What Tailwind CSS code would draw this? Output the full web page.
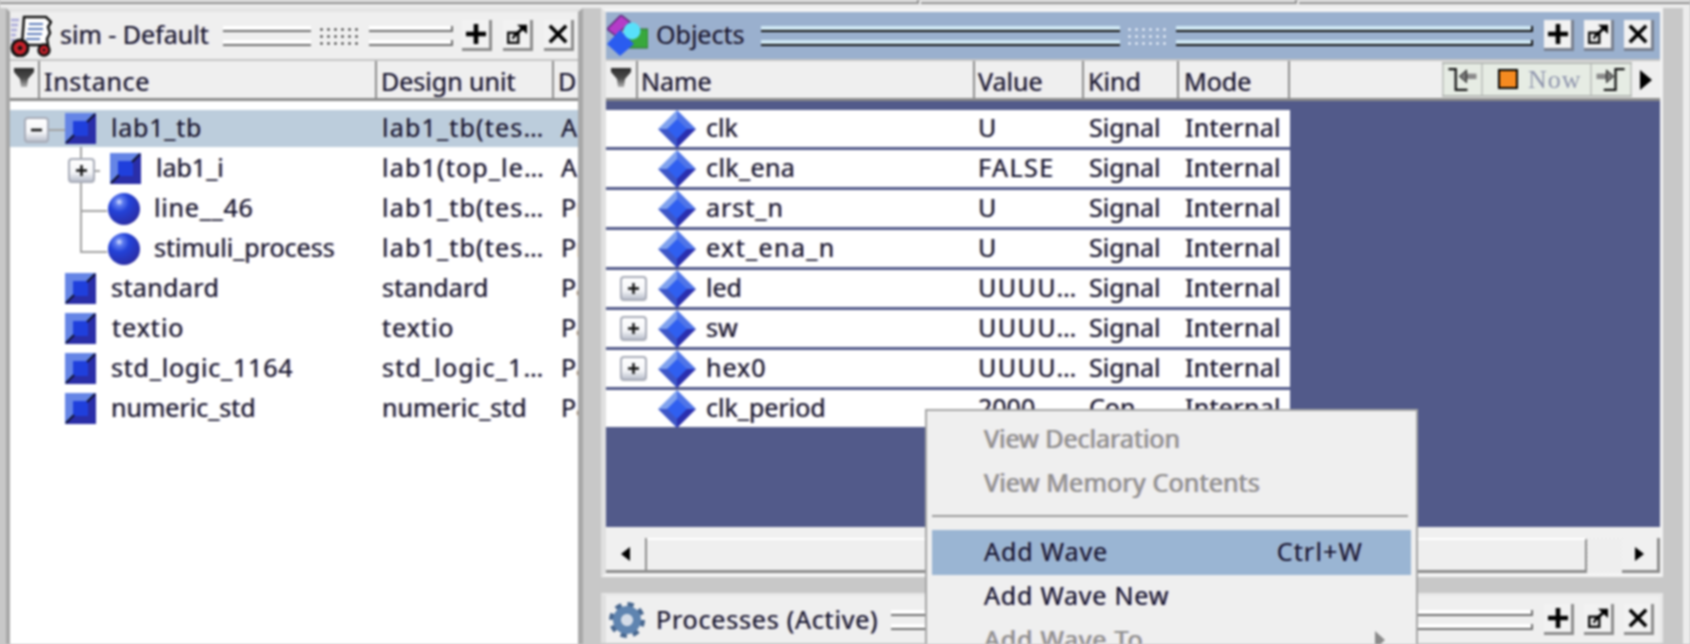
<!DOCTYPE html>
<html lang="en">
<head>
    <meta charset="UTF-8">
    <title>sim - Objects</title>
    <script src="https://cdn.jsdelivr.net/npm/@tailwindcss/browser@4"></script>
</head>
<body class="m-0 bg-[#c8c8c8]">
<svg class="absolute w-0 h-0">
    <defs>
        <radialGradient id="ballFill" cx="35%" cy="28%" r="75%">
            <stop offset="0" stop-color="#dfe6ff"/>
            <stop offset="0.16" stop-color="#5f7df0"/>
            <stop offset="0.42" stop-color="#2342d8"/>
            <stop offset="1" stop-color="#2a2ca4"/>
        </radialGradient>
        <linearGradient id="boxFill" x1="0" y1="0" x2="0" y2="1">
            <stop offset="0" stop-color="#ffffff"/>
            <stop offset="0.6" stop-color="#f4f5f8"/>
            <stop offset="1" stop-color="#b4bac8"/>
        </linearGradient>
        <linearGradient id="funnelFill" x1="0" y1="0" x2="0" y2="1">
            <stop offset="0" stop-color="#2e2e2e"/>
            <stop offset="0.55" stop-color="#4c4c4c"/>
            <stop offset="1" stop-color="#b0b0b0"/>
        </linearGradient>
    </defs>
    <symbol id="sq" viewBox="0 0 31 31">
        <rect width="31" height="31" fill="#2a2ea8"/>
        <polygon points="0,0 31,0 23,8 8,8 8,23 0,31" fill="#6585e6"/>
        <rect x="8" y="8" width="15" height="15" fill="#1f3fdc"/>
        <path d="M22 9 L30 1 M1 30 L9 22" stroke="#10122c" stroke-width="2"/>
    </symbol>
    <symbol id="ball" viewBox="0 0 32 32">
        <circle cx="16" cy="16" r="16" fill="url(#ballFill)"/>
    </symbol>
    <symbol id="dia" viewBox="0 0 38 38">
        <polygon points="19,0 38,19 19,19" fill="#4f75e8"/>
        <polygon points="19,0 0,19 19,19" fill="#80a2ee"/>
        <polygon points="0,19 19,38 19,19" fill="#3d55c8"/>
        <polygon points="38,19 19,38 19,19" fill="#2a2fae"/>
        <polygon points="19,9 29,19 19,29 9,19" fill="#2f5ff0"/>
    </symbol>
    <symbol id="plusbox" viewBox="0 0 27 25">
        <rect x="1" y="1" width="25" height="23" rx="3" fill="url(#boxFill)" stroke="#a8acb8" stroke-width="2"/>
        <path d="M8 12.5 H19 M13.5 7 V18" stroke="#111" stroke-width="2.4"/>
    </symbol>
    <symbol id="addicon" viewBox="0 0 22 22">
        <path d="M11 0 V22 M0 11 H22" stroke="#000" stroke-width="5"/>
    </symbol>
    <symbol id="popicon" viewBox="0 0 24 24">
        <rect x="1.5" y="10.5" width="12" height="12" fill="none" stroke="#111" stroke-width="3"/>
        <rect x="6" y="15" width="3" height="3" fill="#111"/>
        <path d="M8 15 L20 4" stroke="#000" stroke-width="3.5"/>
        <polygon points="12,1 24,1 24,12" fill="#000"/>
    </symbol>
    <symbol id="xicon" viewBox="0 0 22 22">
        <path d="M2 2 L20 20 M20 2 L2 20" stroke="#000" stroke-width="4"/>
    </symbol>
    <symbol id="funnel" viewBox="0 0 20 22">
        <polygon points="0,2 20,2 20,6 14,13 13,21 7,21 6,13 0,6" fill="url(#funnelFill)"/>
    </symbol>
</svg>

<div class="relative w-[1690px] h-[644px] overflow-hidden bg-[#c8c8c8] text-[25px] leading-none text-[#14142e] font-['Noto_Sans','Liberation_Sans',sans-serif] blur-[0.8px] [text-shadow:-1px_0_rgba(225,150,50,.4),1px_0_rgba(50,90,225,.4)]">

    <!-- strip under the main toolbar -->
    <div class="flex h-[8px] bg-[#ececec]">
        <div class="w-[919px] h-[4px] border-b-2 border-r-2 border-[#8e8e8e]"></div>
        <div class="w-[376px] h-[4px] border-b-2 border-r-2 ml-[2px] border-[#8e8e8e]"></div>
        <div class="flex-1 h-[4px] border-b-2 ml-[2px] border-[#8e8e8e]"></div>
    </div>

    <div class="flex h-[636px]">
        <!-- sim panel -->
        <div class="ml-[6px] w-[577px] h-[660px] shrink-0 border-t-[4px] border-l-[4px] border-r-[5px] border-t-[#e4e4e4] border-l-[#a8a8a8] border-r-[#a8a8a8] bg-white">
            <div class="flex items-center h-[47px] bg-[#efefef] pr-[4px]">
                <svg class="w-[42px] h-[42px] shrink-0" viewBox="0 0 42 42">
                    <path d="M1 5 H9 M1 10 H8 M1 15 H7 M1 20 H6 M1 25 H5" stroke="#a8a8d8" stroke-width="2.5"/>
                    <path d="M14 2 H36 L41 7 L38 12 L40 18 L37 24 L38 30 L12 30 Z" fill="#fff" stroke="#111" stroke-width="2.5"/>
                    <path d="M19 9 H33 M18 14 H33 M17 19 H32 M16 24 H30" stroke="#5a7ab8" stroke-width="2.2"/>
                    <circle cx="10" cy="33" r="8" fill="#c8202a" stroke="#111" stroke-width="3"/>
                    <rect x="8" y="31" width="4" height="4" fill="#111" transform="rotate(45 10 33)"/>
                    <circle cx="34" cy="35" r="5.5" fill="#c8202a" stroke="#111" stroke-width="2.5"/>
                    <circle cx="34" cy="35" r="1.5" fill="#111"/>
                </svg>
                <span class="ml-[8px] pb-[3px] w-[163px] shrink-0 whitespace-nowrap">sim - Default</span>
                <div class="flex flex-1 items-center h-[20px] mr-[9px]">
                    <div class="flex flex-col justify-between h-[20px] w-[88px]">
                        <div class="h-[6px] bg-white border-b-2 border-[#6e6e6e]"></div>
                        <div class="h-[6px] bg-white border-b-2 border-[#6e6e6e]"></div>
                    </div>
                    <div class="w-[44px] h-[20px] mx-[7px] bg-[radial-gradient(#333_1px,transparent_1.3px)] bg-[length:7px_7px]"></div>
                    <div class="flex flex-1 flex-col justify-between h-[20px]">
                        <div class="h-[6px] bg-white border-b-2 border-r-2 border-[#6e6e6e]"></div>
                        <div class="h-[6px] bg-white border-b-2 border-r-2 border-[#6e6e6e]"></div>
                    </div>
                </div>
                <div class="flex gap-[11px]">
                    <div class="flex items-center justify-center w-[30px] h-[31px] bg-[#f2f2f2] border-r-[3px] border-b-[3px] border-[#8c8c8c]"><svg class="w-[20px] h-[20px]"><use href="#addicon"/></svg></div>
                    <div class="flex items-center justify-center w-[30px] h-[31px] bg-[#f2f2f2] border-r-[3px] border-b-[3px] border-[#8c8c8c]"><svg class="w-[20px] h-[20px]"><use href="#popicon"/></svg></div>
                    <div class="flex items-center justify-center w-[30px] h-[31px] bg-[#f2f2f2] border-r-[3px] border-b-[3px] border-[#8c8c8c]"><svg class="w-[20px] h-[20px]"><use href="#xicon"/></svg></div>
                </div>
            </div>
            <div class="flex h-[42px] bg-[#efefef] border-t-2 border-b-[3px] border-t-[#c4c4c4] border-b-[#8c8c8c] overflow-hidden">
                <div class="flex items-center justify-center w-[30px] pb-[5px] border-r-2 border-[#8c8c8c]"><svg class="w-[20px] h-[22px]"><use href="#funnel"/></svg></div>
                <div class="flex items-center w-[337px] pl-[4px] pt-[4px] tracking-[0.7px] border-r-2 border-[#8c8c8c]">Instance</div>
                <div class="flex items-center w-[177px] pl-[4px] pt-[4px] border-r-2 border-[#8c8c8c]">Design unit</div>
                <div class="flex items-center flex-1 pl-[4px] pt-[4px] overflow-hidden">D</div>
            </div>
            <div class="relative flex flex-col gap-[3px] pt-[9px] [&_span]:pb-[3px] [&>div>div:not(:first-child)]:pb-[3px]">
                <div class="flex items-center h-[37px] bg-[#bccddc]">
                    <div class="flex items-center w-[367px] pl-[55px] gap-[15px]"><svg class="w-[31px] h-[31px] shrink-0"><use href="#sq"/></svg><span class="tracking-[0.8px]">lab1_tb</span></div>
                    <div class="w-[177px] pl-[5px] whitespace-nowrap tracking-[1.2px]">lab1_tb(tes…</div>
                    <div class="flex-1 pl-[7px] overflow-hidden">A</div>
                </div>
                <div class="flex items-center h-[37px]">
                    <div class="flex items-center w-[367px] pl-[100px] gap-[15px]"><svg class="w-[31px] h-[31px] shrink-0"><use href="#sq"/></svg><span>lab1_i</span></div>
                    <div class="w-[177px] pl-[5px] whitespace-nowrap tracking-[1.2px]">lab1(top_le…</div>
                    <div class="flex-1 pl-[7px] overflow-hidden">A</div>
                </div>
                <div class="flex items-center h-[37px]">
                    <div class="flex items-center w-[367px] pl-[98px] gap-[14px]"><svg class="w-[32px] h-[32px] shrink-0"><use href="#ball"/></svg><span class="tracking-[0.8px]">line__46</span></div>
                    <div class="w-[177px] pl-[5px] whitespace-nowrap tracking-[1.2px]">lab1_tb(tes…</div>
                    <div class="flex-1 pl-[7px] overflow-hidden">Pr</div>
                </div>
                <div class="flex items-center h-[37px]">
                    <div class="flex items-center w-[367px] pl-[98px] gap-[14px]"><svg class="w-[32px] h-[32px] shrink-0"><use href="#ball"/></svg><span>stimuli_process</span></div>
                    <div class="w-[177px] pl-[5px] whitespace-nowrap tracking-[1.2px]">lab1_tb(tes…</div>
                    <div class="flex-1 pl-[7px] overflow-hidden">Pr</div>
                </div>
                <div class="flex items-center h-[37px]">
                    <div class="flex items-center w-[367px] pl-[55px] gap-[15px]"><svg class="w-[31px] h-[31px] shrink-0"><use href="#sq"/></svg><span class="tracking-[0.4px]">standard</span></div>
                    <div class="w-[177px] pl-[5px] whitespace-nowrap tracking-[0.2px]">standard</div>
                    <div class="flex-1 pl-[7px] overflow-hidden">Pa</div>
                </div>
                <div class="flex items-center h-[37px]">
                    <div class="flex items-center w-[367px] pl-[55px] gap-[16px]"><svg class="w-[31px] h-[31px] shrink-0"><use href="#sq"/></svg><span class="tracking-[1px]">textio</span></div>
                    <div class="w-[177px] pl-[5px] whitespace-nowrap tracking-[1px]">textio</div>
                    <div class="flex-1 pl-[7px] overflow-hidden">Pa</div>
                </div>
                <div class="flex items-center h-[37px]">
                    <div class="flex items-center w-[367px] pl-[55px] gap-[15px]"><svg class="w-[31px] h-[31px] shrink-0"><use href="#sq"/></svg><span class="tracking-[0.8px]">std_logic_1164</span></div>
                    <div class="w-[177px] pl-[5px] whitespace-nowrap tracking-[1.2px]">std_logic_1…</div>
                    <div class="flex-1 pl-[7px] overflow-hidden">Pa</div>
                </div>
                <div class="flex items-center h-[37px]">
                    <div class="flex items-center w-[367px] pl-[55px] gap-[15px]"><svg class="w-[31px] h-[31px] shrink-0"><use href="#sq"/></svg><span>numeric_std</span></div>
                    <div class="w-[177px] pl-[5px] whitespace-nowrap">numeric_std</div>
                    <div class="flex-1 pl-[7px] overflow-hidden">Pa</div>
                </div>
                <!-- tree connectors and expand boxes -->
                <svg class="absolute left-0 top-0 w-[130px] h-[170px] pointer-events-none">
                    <path d="M38 29 H55 M71 46 V151 H97 M85 70 H90 M71 110 H97" fill="none" stroke="#a2a2a2" stroke-width="2"/>
                    <use href="#plusbox" x="58" y="57" width="27" height="25"/>
                    <rect x="15" y="17" width="23" height="24" rx="3" fill="url(#boxFill)" stroke="#a8acb8" stroke-width="2"/>
                    <path d="M21 29 H32" stroke="#111" stroke-width="2.6"/>
                </svg>
            </div>
        </div>

        <div class="flex-1 flex flex-col pl-[18px] min-w-0">
            <!-- Objects panel -->
            <div class="w-[1062px] h-[569px] shrink-0 flex flex-col border-l-[5px] border-r-[3px] border-t-[4px] border-b-[4px] border-l-[#e0e0e0] border-r-[#f2f2f2] border-t-[#f4f4f4] border-b-[#f4f4f4]">
                <div class="flex items-center h-[47px] shrink-0 bg-[#9ab0ce] pr-[6px]">
                    <svg class="w-[41px] h-[41px] ml-[1px] shrink-0" viewBox="0 0 41 41">
                        <polygon points="0,14 14,0 23,7 9,21" fill="#b43cc8" stroke="#5a2a78" stroke-width="1.5"/>
                        <rect x="22" y="14" width="19" height="19" fill="#38a83c" stroke="#2a6a30" stroke-width="1"/>
                        <polygon points="13,15 27,29 13,41 0,29" fill="#2a5cf0"/>
                        <circle cx="25" cy="16" r="8.5" fill="#58e0fa"/>
                    </svg>
                    <span class="ml-[8px] pb-[2px] w-[105px] shrink-0">Objects</span>
                    <div class="flex flex-1 items-center h-[20px] mr-[11px]">
                        <div class="flex flex-1 flex-col justify-between h-[20px]">
                            <div class="h-[6px] bg-[#cfe8f4] border-b-2 border-[#111]"></div>
                            <div class="h-[6px] bg-[#cfe8f4] border-b-2 border-[#111]"></div>
                        </div>
                        <div class="w-[44px] h-[20px] mx-[6px] bg-[radial-gradient(#f4f8ff_1.1px,transparent_1.4px)] bg-[length:7px_7px]"></div>
                        <div class="flex w-[357px] flex-col justify-between h-[20px]">
                            <div class="h-[6px] bg-[#cfe8f4] border-b-2 border-r-2 border-[#111]"></div>
                            <div class="h-[6px] bg-[#cfe8f4] border-b-2 border-r-2 border-[#111]"></div>
                        </div>
                    </div>
                    <div class="flex gap-[10px]">
                        <div class="flex items-center justify-center w-[30px] h-[31px] bg-[#f2f2f2] border-r-[3px] border-b-[3px] border-[#777f8e]"><svg class="w-[20px] h-[20px]"><use href="#addicon"/></svg></div>
                        <div class="flex items-center justify-center w-[30px] h-[31px] bg-[#f2f2f2] border-r-[3px] border-b-[3px] border-[#777f8e]"><svg class="w-[20px] h-[20px]"><use href="#popicon"/></svg></div>
                        <div class="flex items-center justify-center w-[30px] h-[31px] bg-[#f2f2f2] border-r-[3px] border-b-[3px] border-[#777f8e]"><svg class="w-[20px] h-[20px]"><use href="#xicon"/></svg></div>
                    </div>
                </div>
                <div class="flex h-[42px] shrink-0 bg-[#efefef] border-t-2 border-b-[3px] border-t-[#c4c4c4] border-b-[#8c8c8c]">
                    <div class="flex items-center justify-center w-[32px] pb-[5px] border-r-2 border-[#8c8c8c]"><svg class="w-[20px] h-[22px]"><use href="#funnel"/></svg></div>
                    <div class="flex items-center w-[337px] pl-[3px] pt-[4px] border-r-2 border-[#8c8c8c]">Name</div>
                    <div class="flex items-center w-[109px] pl-[3px] pt-[4px] border-r-2 border-[#8c8c8c]">Value</div>
                    <div class="flex items-center w-[95px] pl-[4px] pt-[4px] border-r-2 border-[#8c8c8c]">Kind</div>
                    <div class="flex items-center w-[111px] pl-[5px] pt-[4px] border-r-2 border-[#8c8c8c]">Mode</div>
                    <div class="flex flex-1 items-center justify-end pr-[8px]">
                        <div class="flex h-[35px] mr-[8px] border-b-2 border-t-2 border-[#b4b8b4] bg-[#e6ece4] gap-[2px]">
                            <svg class="w-[41px] h-[31px] border-l-2 border-r-2 border-[#c4c8c4]" viewBox="0 0 41 33">
                                <path d="M5 5 H13 V28 H26" fill="none" stroke="#111" stroke-width="2.5"/>
                                <path d="M21 13 H36" stroke="#8a8a8a" stroke-width="6"/>
                                <polygon points="17,13 25,6 25,20" fill="#777" stroke="#111" stroke-width="1"/>
                            </svg>
                            <div class="flex items-center w-[103px] pl-[13px] gap-[10px]">
                                <div class="w-[20px] h-[20px] mb-[2px] bg-[#f58a20] border-2 border-black"></div>
                                <span class="font-['Liberation_Serif',serif] text-[#8f95ad] text-[26px] tracking-[1px] [text-shadow:none]">Now</span>
                            </div>
                            <svg class="w-[42px] h-[31px] border-l-2 border-r-2 border-[#c4c8c4]" viewBox="0 0 42 33">
                                <path d="M36 5 H26 V28 H13" fill="none" stroke="#111" stroke-width="2.5"/>
                                <path d="M5 13 H18" stroke="#8a8a8a" stroke-width="6"/>
                                <polygon points="24,13 16,6 16,20" fill="#777" stroke="#111" stroke-width="1"/>
                            </svg>
                        </div>
                        <svg class="w-[12px] h-[20px]" viewBox="0 0 12 20"><polygon points="0,0 12,10 0,20" fill="#000"/></svg>
                    </div>
                </div>
                <div class="flex-1 min-h-0 bg-[#525a8a] pt-[9px] flex flex-col gap-[3px] [&_span]:pb-[3px] [&>div>div:not(:first-child)]:pb-[3px]">
                    <div class="flex items-center w-[684px] h-[37px] bg-white">
                        <div class="flex items-center w-[369px]"><div class="w-[52px]"></div><svg class="w-[38px] h-[38px] shrink-0"><use href="#dia"/></svg><span class="ml-[10px]">clk</span></div>
                        <div class="w-[109px] pl-[3px]">U</div><div class="w-[95px] pl-[5px]">Signal</div><div class="w-[111px] pl-[6px] tracking-[0.3px]">Internal</div>
                    </div>
                    <div class="flex items-center w-[684px] h-[37px] bg-white">
                        <div class="flex items-center w-[369px]"><div class="w-[52px]"></div><svg class="w-[38px] h-[38px] shrink-0"><use href="#dia"/></svg><span class="ml-[10px] tracking-[0.4px]">clk_ena</span></div>
                        <div class="w-[109px] pl-[3px] tracking-[1.5px]">FALSE</div><div class="w-[95px] pl-[5px]">Signal</div><div class="w-[111px] pl-[6px] tracking-[0.3px]">Internal</div>
                    </div>
                    <div class="flex items-center w-[684px] h-[37px] bg-white">
                        <div class="flex items-center w-[369px]"><div class="w-[52px]"></div><svg class="w-[38px] h-[38px] shrink-0"><use href="#dia"/></svg><span class="ml-[10px] tracking-[1px]">arst_n</span></div>
                        <div class="w-[109px] pl-[3px]">U</div><div class="w-[95px] pl-[5px]">Signal</div><div class="w-[111px] pl-[6px] tracking-[0.3px]">Internal</div>
                    </div>
                    <div class="flex items-center w-[684px] h-[37px] bg-white">
                        <div class="flex items-center w-[369px]"><div class="w-[52px]"></div><svg class="w-[38px] h-[38px] shrink-0"><use href="#dia"/></svg><span class="ml-[10px] tracking-[1.4px]">ext_ena_n</span></div>
                        <div class="w-[109px] pl-[3px]">U</div><div class="w-[95px] pl-[5px]">Signal</div><div class="w-[111px] pl-[6px] tracking-[0.3px]">Internal</div>
                    </div>
                    <div class="flex items-center w-[684px] h-[37px] bg-white">
                        <div class="flex items-center w-[369px]"><div class="w-[52px] pl-[14px]"><svg class="block w-[27px] h-[25px]"><use href="#plusbox"/></svg></div><svg class="w-[38px] h-[38px] shrink-0"><use href="#dia"/></svg><span class="ml-[10px]">led</span></div>
                        <div class="w-[109px] pl-[3px] tracking-[1.5px]">UUUU…</div><div class="w-[95px] pl-[5px]">Signal</div><div class="w-[111px] pl-[6px] tracking-[0.3px]">Internal</div>
                    </div>
                    <div class="flex items-center w-[684px] h-[37px] bg-white">
                        <div class="flex items-center w-[369px]"><div class="w-[52px] pl-[14px]"><svg class="block w-[27px] h-[25px]"><use href="#plusbox"/></svg></div><svg class="w-[38px] h-[38px] shrink-0"><use href="#dia"/></svg><span class="ml-[10px]">sw</span></div>
                        <div class="w-[109px] pl-[3px] tracking-[1.5px]">UUUU…</div><div class="w-[95px] pl-[5px]">Signal</div><div class="w-[111px] pl-[6px] tracking-[0.3px]">Internal</div>
                    </div>
                    <div class="flex items-center w-[684px] h-[37px] bg-white">
                        <div class="flex items-center w-[369px]"><div class="w-[52px] pl-[14px]"><svg class="block w-[27px] h-[25px]"><use href="#plusbox"/></svg></div><svg class="w-[38px] h-[38px] shrink-0"><use href="#dia"/></svg><span class="ml-[10px] tracking-[1px]">hex0</span></div>
                        <div class="w-[109px] pl-[3px] tracking-[1.5px]">UUUU…</div><div class="w-[95px] pl-[5px]">Signal</div><div class="w-[111px] pl-[6px] tracking-[0.3px]">Internal</div>
                    </div>
                    <div class="flex items-center w-[684px] h-[37px] bg-white">
                        <div class="flex items-center w-[369px]"><div class="w-[52px]"></div><svg class="w-[38px] h-[38px] shrink-0"><use href="#dia"/></svg><span class="ml-[10px]">clk_period</span></div>
                        <div class="w-[109px] pl-[3px]">2000</div><div class="w-[95px] pl-[5px]">Con…</div><div class="w-[111px] pl-[6px] tracking-[0.3px]">Internal</div>
                    </div>
                </div>
                <div class="h-[46px] shrink-0 pt-[11px] bg-[#f0f0f0] flex">
                    <div class="flex items-center justify-center w-[41px] h-[35px] border-r-2 border-b-[3px] border-[#8c8c8c]"><svg class="w-[9px] h-[14px]" viewBox="0 0 9 14"><polygon points="9,0 0,7 9,14" fill="#000"/></svg></div>
                    <div class="flex-1 h-[35px] bg-[#efefef] border-t-2 border-t-white border-r-2 border-b-[3px] border-[#8c8c8c]"></div>
                    <div class="w-[35px] h-[35px] bg-[#f6f6f6] bg-[repeating-conic-gradient(#e4e4e4_0_25%,#f8f8f8_0_50%)] bg-[length:4px_4px]"></div>
                    <div class="flex items-center justify-center w-[38px] h-[35px] border-r-[3px] border-b-[3px] border-[#8c8c8c]"><svg class="w-[9px] h-[14px]" viewBox="0 0 9 14"><polygon points="0,0 9,7 0,14" fill="#000"/></svg></div>
                </div>
            </div>

            <!-- Processes panel -->
            <div class="w-[1062px] mt-[16px] shrink-0 border-l-[5px] border-r-[3px] border-t-[3px] border-l-[#e0e0e0] border-r-[#e8e8e8] border-t-[#e8e8e8]">
                <div class="flex items-center h-[47px] bg-[#efefef] pr-[6px]">
                    <svg class="w-[38px] h-[38px] ml-[2px] mr-[2px] shrink-0" viewBox="0 0 38 38">
                        <circle cx="19" cy="19" r="15" fill="none" stroke="#47668e" stroke-width="6" stroke-dasharray="6 5.78"/>
                        <circle cx="19" cy="19" r="10" fill="none" stroke="#5f84b0" stroke-width="8"/>
                        <circle cx="19" cy="19" r="5.5" fill="#d4dce8"/>
                    </svg>
                    <span class="ml-[8px] w-[235px] shrink-0 whitespace-nowrap tracking-[0.8px]">Processes (Active)</span>
                    <div class="flex flex-1 flex-col justify-between h-[20px] mr-[11px]">
                        <div class="h-[6px] bg-white border-b-2 border-r-2 border-[#6e6e6e]"></div>
                        <div class="h-[6px] bg-white border-b-2 border-r-2 border-[#6e6e6e]"></div>
                    </div>
                    <div class="flex gap-[10px]">
                        <div class="flex items-center justify-center w-[30px] h-[31px] bg-[#f2f2f2] border-r-[3px] border-b-[3px] border-[#8c8c8c]"><svg class="w-[20px] h-[20px]"><use href="#addicon"/></svg></div>
                        <div class="flex items-center justify-center w-[30px] h-[31px] bg-[#f2f2f2] border-r-[3px] border-b-[3px] border-[#8c8c8c]"><svg class="w-[20px] h-[20px]"><use href="#popicon"/></svg></div>
                        <div class="flex items-center justify-center w-[30px] h-[31px] bg-[#f2f2f2] border-r-[3px] border-b-[3px] border-[#8c8c8c]"><svg class="w-[20px] h-[20px]"><use href="#xicon"/></svg></div>
                    </div>
                </div>
            </div>
        </div>
    </div>

    <!-- lighter strip at the right edge -->
    <div class="absolute right-0 top-[8px] bottom-0 w-[7px] bg-[#ececec]"></div>

    <!-- context menu -->
    <div class="absolute left-[925px] top-[409px] w-[493px] h-[270px] bg-[#efefef] border-2 border-[#a4a4a4] pt-[7px] px-[5px] text-[#121230]">
        <div class="flex items-center h-[44px] pl-[52px] pb-[3px] text-[#8e8e8e]">View Declaration</div>
        <div class="flex items-center h-[44px] pl-[52px] pb-[3px] text-[#8e8e8e] tracking-[0.2px]">View Memory Contents</div>
        <div class="mt-[9px] mb-[13px] mr-[3px] h-[2px] bg-[#9a9a9a]"></div>
        <div class="flex items-center justify-between h-[45px] pl-[52px] pr-[48px] pb-[3px] bg-[#9ab5d3]"><span class="tracking-[0.9px]">Add Wave</span><span class="tracking-[1.2px]">Ctrl+W</span></div>
        <div class="flex items-center h-[44px] pl-[52px] pb-[3px] tracking-[0.8px]">Add Wave New</div>
        <div class="flex items-center justify-between h-[44px] pl-[52px] pr-[26px] pb-[3px] text-[#8e8e8e] tracking-[0.8px]"><span>Add Wave To</span><svg class="w-[10px] h-[18px]" viewBox="0 0 10 18"><polygon points="0,0 10,9 0,18" fill="#8a8a8a"/></svg></div>
    </div>
</div>
</body>
</html>
